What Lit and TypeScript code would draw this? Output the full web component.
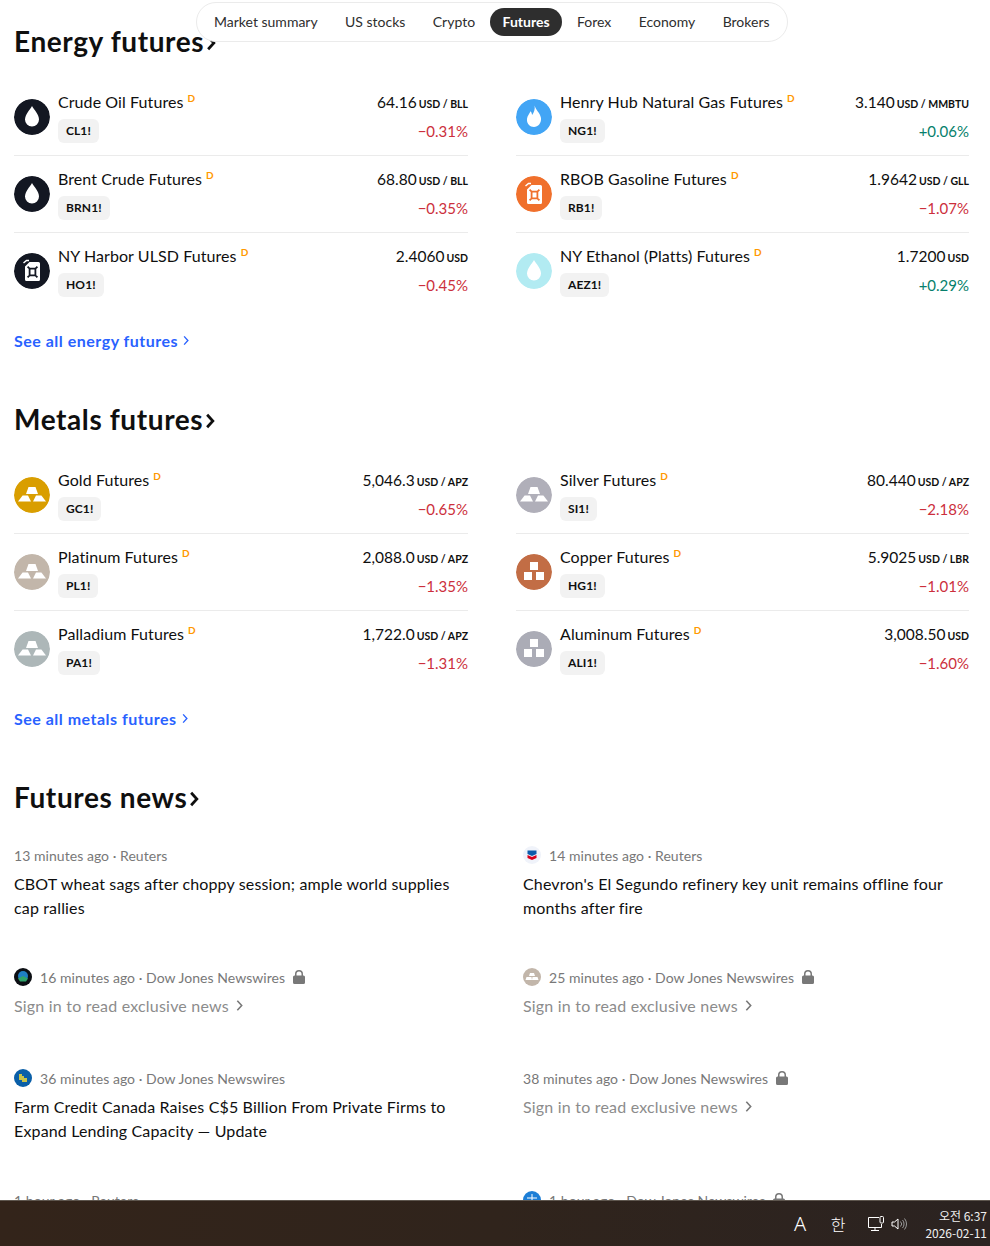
import { LitElement, css, html, svg } from "lit";
import { customElement } from "lit/decorators.js";

type Quote = {
  name: string;
  ticker: string;
  price: string;
  unit: string;
  change: string;
  icon: string;
  color: string;
};

type News = {
  meta: string;
  logo?: string;
  lock?: boolean;
  title?: string;
};

const energy: Quote[] = [
  { name: "Crude Oil Futures", ticker: "CL1!", price: "64.16", unit: "USD / BLL", change: "−0.31%", icon: "drop", color: "#131722" },
  { name: "Henry Hub Natural Gas Futures", ticker: "NG1!", price: "3.140", unit: "USD / MMBTU", change: "+0.06%", icon: "flame", color: "#42a5f5" },
  { name: "Brent Crude Futures", ticker: "BRN1!", price: "68.80", unit: "USD / BLL", change: "−0.35%", icon: "drop", color: "#131722" },
  { name: "RBOB Gasoline Futures", ticker: "RB1!", price: "1.9642", unit: "USD / GLL", change: "−1.07%", icon: "can", color: "#f0702c" },
  { name: "NY Harbor ULSD Futures", ticker: "HO1!", price: "2.4060", unit: "USD", change: "−0.45%", icon: "can", color: "#131722" },
  { name: "NY Ethanol (Platts) Futures", ticker: "AEZ1!", price: "1.7200", unit: "USD", change: "+0.29%", icon: "drop", color: "#b2ebf2" }
];

const metals: Quote[] = [
  { name: "Gold Futures", ticker: "GC1!", price: "5,046.3", unit: "USD / APZ", change: "−0.65%", icon: "bars", color: "#d99e00" },
  { name: "Silver Futures", ticker: "SI1!", price: "80.440", unit: "USD / APZ", change: "−2.18%", icon: "bars", color: "#b0afb9" },
  { name: "Platinum Futures", ticker: "PL1!", price: "2,088.0", unit: "USD / APZ", change: "−1.35%", icon: "bars", color: "#c2b6aa" },
  { name: "Copper Futures", ticker: "HG1!", price: "5.9025", unit: "USD / LBR", change: "−1.01%", icon: "cubes", color: "#c26d45" },
  { name: "Palladium Futures", ticker: "PA1!", price: "1,722.0", unit: "USD / APZ", change: "−1.31%", icon: "bars", color: "#adb7b8" },
  { name: "Aluminum Futures", ticker: "ALI1!", price: "3,008.50", unit: "USD", change: "−1.60%", icon: "cubes", color: "#abacb6" }
];

const news: News[] = [
  { meta: "13 minutes ago · Reuters", title: "CBOT wheat sags after choppy session; ample world supplies\ncap rallies" },
  { meta: "14 minutes ago · Reuters", logo: "chevron", title: "Chevron's El Segundo refinery key unit remains offline four\nmonths after fire" },
  { meta: "16 minutes ago · Dow Jones Newswires", logo: "globe", lock: true },
  { meta: "25 minutes ago · Dow Jones Newswires", logo: "platinum", lock: true },
  { meta: "36 minutes ago · Dow Jones Newswires", logo: "farm", title: "Farm Credit Canada Raises C$5 Billion From Private Firms to\nExpand Lending Capacity — Update" },
  { meta: "38 minutes ago · Dow Jones Newswires", lock: true },
  { meta: "1 hour ago · Reuters", title: "" },
  { meta: "1 hour ago · Dow Jones Newswires", logo: "blue", lock: true }
];

const tabs = ["Market summary", "US stocks", "Crypto", "Futures", "Forex", "Economy", "Brokers"];

function glyph(name: string, color: string) {
  if (name === "drop") {
    return svg`<path fill="#fff" d="M18 7C16 10.500 11 15.500 11 20.500a7 7 0 0 0 14 0C25 15.500 20 10.500 18 7Z"/>`;
  }
  if (name === "flame") {
    return svg`<path fill="#fff" d="M18.600 6.500C19.600 11 24 13.500 25 19c.6 5-3 9-7 9s-7.500-3.300-7-8c.3-3 2.400-5.200 3.600-7.700.9 1.100 1.300 2.400 1.500 3.700C18 13.500 19.200 10.200 18.600 6.500Z"/>`;
  }
  if (name === "can") {
    return svg`<path fill="#fff" d="M15.500 9H24.500A1.500 1.500 0 0 1 26 10.500V26.500A1.500 1.500 0 0 1 24.500 28H12.500A1.500 1.500 0 0 1 11 26.500V13.500Z"/>
      <path fill="none" stroke="#fff" stroke-width="1.500" d="M9.500 10 12.500 7.500H15"/>
      <path fill="none" stroke=${color} stroke-width="1.800" d="M15.600 15.600h5.800v6.800h-5.800ZM13.600 13.600l2 2M23.400 13.600l-2 2M13.600 24.400l2-2M23.400 24.400l-2-2"/>`;
  }
  if (name === "bars") {
    return svg`<path fill="#fff" d="M14.500 10H21.500L24 17H12Z"/>
      <path fill="#fff" d="M8.600 18.500H14L17 24.500H4Z"/>
      <path fill="#fff" d="M22 18.500H27.400L32 24.500H19Z"/>`;
  }
  return svg`<path fill="#fff" d="M14 8h8v8h-8ZM8 18h8v8H8ZM20 18h8v8h-8Z"/>`;
}

@customElement("app-root")
export class AppRoot extends LitElement {
  static styles = css`
    :host {
      display: block;
      position: relative;
      height: 1246px;
      overflow: hidden;
      background: #fff;
      color: #0f0f0f;
      font-family: Lato, sans-serif;
    }

    .page {
      padding: 23px 21px 0 14px;
    }

    .nav {
      position: absolute;
      top: 2px;
      left: 196px;
      display: flex;
      gap: 3.4px;
      padding: 5px;
      border: 1px solid #ebebeb;
      border-radius: 20px;
      background: #fff;
    }

    .tab {
      height: 28px;
      padding: 0 12px;
      border-radius: 14px;
      font-size: 14px;
      line-height: 28px;
      color: #2e2e2e;
    }

    .tab.active {
      background: #2e2e2e;
      color: #fff;
      font-weight: 700;
    }

    h2 {
      display: flex;
      align-items: center;
      height: 36px;
      margin: 0;
      font-size: 28px;
      font-weight: 700;
      letter-spacing: 0.6px;
      line-height: 36px;
    }

    h2 svg {
      margin: 4px 0 0 2px;
    }

    .quotes {
      display: grid;
      grid-template-columns: 454px 453px;
      column-gap: 48px;
      margin-top: 20px;
    }

    .quote {
      display: flex;
      gap: 8px;
      height: 77px;
      padding: 11px 0 0;
      box-sizing: border-box;
      border-bottom: 1px solid #ebebeb;
    }

    .quote:nth-last-child(-n + 2) {
      border-bottom: none;
    }

    .quote > svg {
      flex: none;
      width: 36px;
      height: 36px;
      margin-top: 9px;
      border-radius: 50%;
    }

    .info {
      flex: 1;
      min-width: 0;
    }

    .line {
      display: flex;
      justify-content: space-between;
      align-items: baseline;
      height: 24px;
      line-height: 24px;
      white-space: nowrap;
    }

    .line + .line {
      align-items: center;
      margin-top: 5px;
    }

    .name {
      font-size: 16px;
      letter-spacing: 0.08px;
    }

    .name sup {
      margin-left: 4px;
      font-size: 10px;
      font-weight: 700;
      line-height: 0;
      color: #ff9800;
      vertical-align: 6px;
    }

    .price {
      font-size: 15.5px;
    }

    .unit {
      margin-left: 2px;
      font-size: 10.5px;
      font-weight: 700;
    }

    .ticker {
      height: 24px;
      padding: 0 8px;
      border-radius: 6px;
      background: #f2f2f2;
      font-size: 12px;
      font-weight: 700;
      letter-spacing: 0.1px;
      line-height: 24px;
    }

    .change {
      font-size: 15px;
      color: #cc2f3c;
    }

    .change.up {
      color: #067f6c;
    }

    .more {
      display: flex;
      align-items: center;
      gap: 5px;
      height: 24px;
      margin: 18px 0 49px;
      font-size: 16px;
      font-weight: 700;
      letter-spacing: 0.5px;
      color: #2962ff;
    }

    .news {
      display: grid;
      grid-template-columns: 509px 1fr;
      margin-top: 28px;
    }

    .item {
      margin-bottom: 45px;
    }

    .item.locked {
      margin-bottom: 49px;
    }

    .meta {
      display: flex;
      align-items: center;
      gap: 8px;
      height: 24px;
      font-size: 14px;
      letter-spacing: 0.05px;
      color: #787878;
      white-space: nowrap;
    }

    .meta svg {
      flex: none;
    }

    .title {
      margin-top: 5px;
      font-size: 16px;
      letter-spacing: 0.15px;
      line-height: 24px;
      white-space: pre-line;
    }

    .signin {
      display: flex;
      align-items: center;
      gap: 7px;
      height: 24px;
      margin-top: 4px;
      font-size: 16px;
      letter-spacing: 0.2px;
      color: #8c8c8c;
    }

    .taskbar {
      position: absolute;
      left: 0;
      right: 0;
      bottom: 0;
      display: flex;
      justify-content: flex-end;
      align-items: center;
      height: 45px;
      padding-right: 3px;
      border-top: 1px solid #5e564e;
      background: linear-gradient(90deg, #33241a, #30241c 50%, #2b2321);
      color: #fff;
      font-family: "Noto Sans CJK KR", "Noto Sans", sans-serif;
    }

    .ime {
      width: 38px;
      font-size: 16px;
      font-weight: 300;
      text-align: center;
    }

    .ime.latin {
      font-family: "Noto Sans", sans-serif;
      font-size: 20px;
    }

    .tray {
      display: flex;
      align-items: center;
      gap: 6px;
      margin: 0 16px 0 10px;
    }

    .clock {
      min-width: 63px;
      font-size: 12px;
      line-height: 17px;
      text-align: right;
      color: #f0f0f0;
    }
  `;

  private _chevron(color: string, w: number, h: number, sw: number) {
    return html`<svg width=${w} height=${h} viewBox="0 0 8 14" fill="none">
      <path d="M1.500 1.500 6.500 7l-5 5.500" stroke=${color} stroke-width=${sw} />
    </svg>`;
  }

  private _logo(name: string) {
    const art: Record<string, unknown> = {
      chevron: svg`<circle cx="9" cy="9" r="9" fill="#f0f3fa"/>
        <path fill="#0b5cab" d="M4.500 4.500h9v3.500L9 10 4.500 8Z"/>
        <path fill="#d6001c" d="M4.500 9 9 11l4.500-2v3L9 14l-4.500-2Z"/>`,
      globe: svg`<circle cx="9" cy="9" r="9" fill="#0c0f14"/>
        <circle cx="9" cy="8" r="5" fill="#1f7fc4"/>
        <path fill="#2fa36b" d="M4 10.500 9 8l5 2.500-2 3H6Z"/>`,
      platinum: svg`<circle cx="9" cy="9" r="9" fill="#c2b6aa"/>
        <path fill="#fff" d="M7 5h4l1 3H6ZM3.500 9h5l.5 3H2.500ZM9.500 9h5l1 3H9Z"/>`,
      farm: svg`<circle cx="9" cy="9" r="9" fill="#0a5fa8"/>
        <path fill="#c9c34a" d="M5 5h3v2h2v2h3v4H8v-2H5Z"/>`,
      blue: svg`<circle cx="9" cy="9" r="9" fill="#1c7ed6"/>
        <path fill="none" stroke="#fff" d="M4 7h10M4 11h10M9 3v12"/>`
    };
    return html`<svg width="18" height="18" viewBox="0 0 18 18">${art[name]}</svg>`;
  }

  private _lock() {
    return html`<svg width="12" height="14" viewBox="0 0 12 14">
      <path
        fill="#787878"
        d="M2 5.500V4a4 4 0 0 1 8 0v1.500h.5A1.500 1.500 0 0 1 12 7v5.500A1.500 1.500 0 0 1 10.500 14h-9A1.500 1.500 0 0 1 0 12.500V7a1.500 1.500 0 0 1 1.500-1.500ZM3.500 5.500h5V4a2.500 2.500 0 0 0-5 0Z"
      />
    </svg>`;
  }

  private _quote(q: Quote) {
    return html`<div class="quote">
      <svg viewBox="0 0 36 36">
        <circle cx="18" cy="18" r="18" fill=${q.color} />
        ${glyph(q.icon, q.color)}
      </svg>
      <div class="info">
        <div class="line">
          <span class="name">${q.name}<sup>D</sup></span>
          <span class="price">${q.price}<span class="unit">${q.unit}</span></span>
        </div>
        <div class="line">
          <span class="ticker">${q.ticker}</span>
          <span class="change ${q.change.startsWith("+") ? "up" : ""}">${q.change}</span>
        </div>
      </div>
    </div>`;
  }

  private _section(label: string, more: string, quotes: Quote[]) {
    return html`<h2>${label}${this._chevron("#0f0f0f", 10, 16, 2.4)}</h2>
      <div class="quotes">${quotes.map(q => this._quote(q))}</div>
      <div class="more">${more}${this._chevron("#2962ff", 6, 11, 1.8)}</div>`;
  }

  render() {
    return html`<div class="page">
        ${this._section("Energy futures", "See all energy futures", energy)}
        ${this._section("Metals futures", "See all metals futures", metals)}
        <h2>Futures news${this._chevron("#0f0f0f", 10, 16, 2.4)}</h2>
        <div class="news">
          ${news.map(
            n => html`<div class="item ${n.title === undefined ? "locked" : ""}">
              <div class="meta">
                ${n.logo ? this._logo(n.logo) : null}
                <span>${n.meta}</span>
                ${n.lock ? this._lock() : null}
              </div>
              ${n.title !== undefined
                ? html`<div class="title">${n.title}</div>`
                : html`<div class="signin">
                    Sign in to read exclusive news${this._chevron("#787878", 7, 13, 1.8)}
                  </div>`}
            </div>`
          )}
        </div>
      </div>
      <div class="nav">
        ${tabs.map(t => html`<div class="tab ${t === "Futures" ? "active" : ""}">${t}</div>`)}
      </div>
      <div class="taskbar">
        <div class="ime latin">A</div>
        <div class="ime">한</div>
        <div class="tray">
          <svg width="18" height="17" viewBox="0 0 18 17" fill="none" stroke="#fff">
            <path d="M12 2.500H1.500v10h13V9M4 15.500h8M8 12.500v3" />
            <rect x="13" y="1.500" width="3.500" height="6.500" rx="1" />
          </svg>
          <svg width="17" height="14" viewBox="0 0 17 14" fill="none" stroke="#fff">
            <path d="M1 5v4h2.500L7 12V2L3.500 5Z" />
            <path stroke="#9a9a9a" d="M9.500 4.500a3.500 3.500 0 0 1 0 5M11.500 3a6 6 0 0 1 0 8M13.500 1.500a8.500 8.500 0 0 1 0 11" />
          </svg>
        </div>
        <div class="clock">오전 6:37<br />2026-02-11</div>
      </div>`;
  }
}
